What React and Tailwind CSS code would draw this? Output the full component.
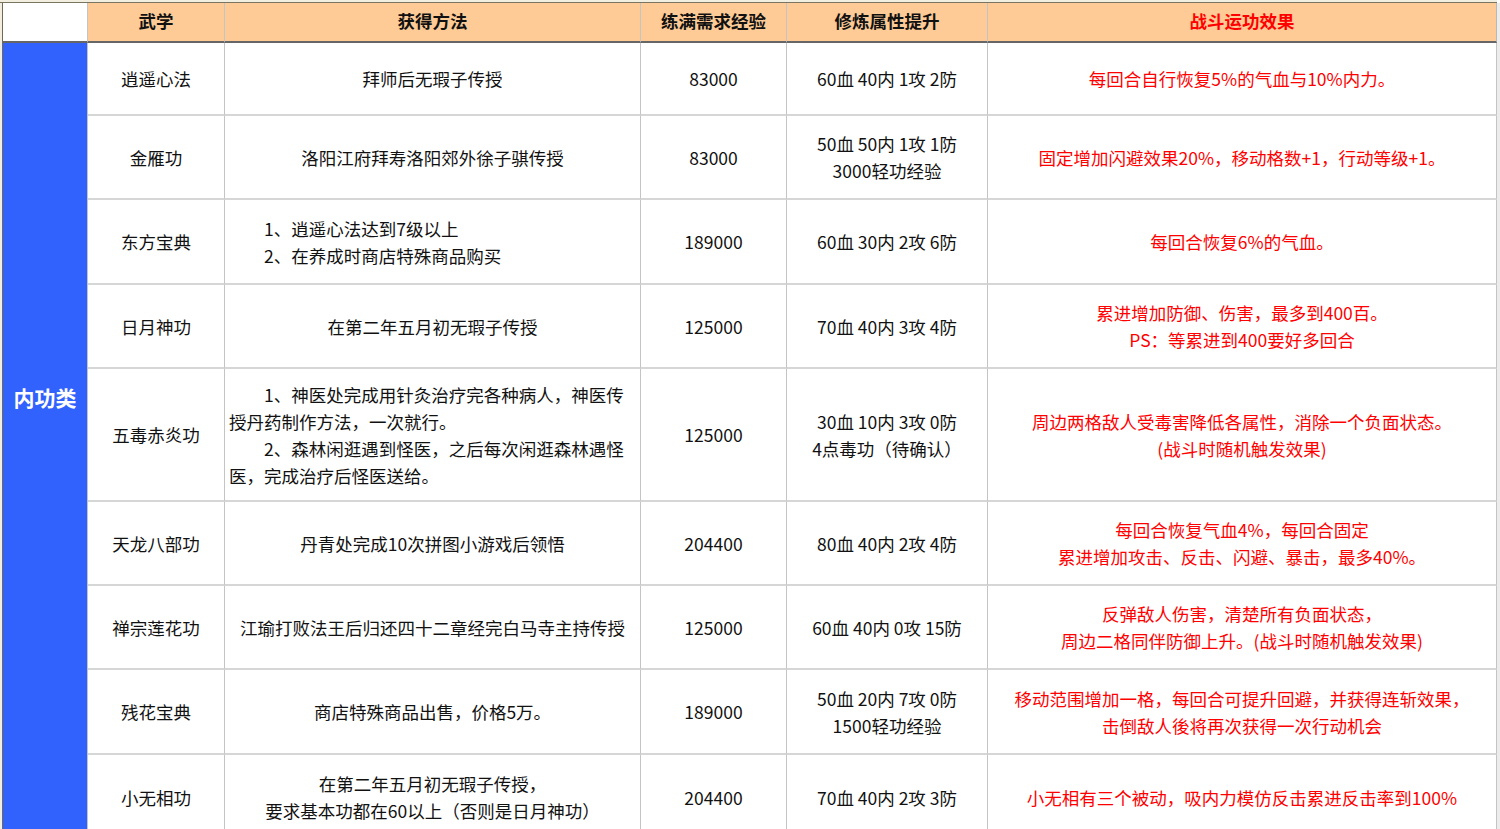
import React from "react";

const rows = [
  {
    h: "h-[73px]",
    name: "逍遥心法",
    method: ["拜师后无瑕子传授"],
    exp: "83000",
    stats: ["60血 40内 1攻 2防"],
    effect: ["每回合自行恢复5%的气血与10%内力。"],
  },
  {
    h: "h-[84px]",
    name: "金雁功",
    method: ["洛阳江府拜寿洛阳郊外徐子骐传授"],
    exp: "83000",
    stats: ["50血 50内 1攻 1防", "3000轻功经验"],
    effect: ["固定增加闪避效果20%，移动格数+1，行动等级+1。"],
  },
  {
    h: "h-[85px]",
    name: "东方宝典",
    list: [["1、逍遥心法达到7级以上"], ["2、在养成时商店特殊商品购买"]],
    exp: "189000",
    stats: ["60血 30内 2攻 6防"],
    effect: ["每回合恢复6%的气血。"],
  },
  {
    h: "h-[84px]",
    name: "日月神功",
    method: ["在第二年五月初无瑕子传授"],
    exp: "125000",
    stats: ["70血 40内 3攻 4防"],
    effect: ["累进增加防御、伤害，最多到400百。", "PS：等累进到400要好多回合"],
  },
  {
    h: "h-[133px]",
    name: "五毒赤炎功",
    list: [
      ["1、神医处完成用针灸治疗完各种病人，神医传", "授丹药制作方法，一次就行。"],
      ["2、森林闲逛遇到怪医，之后每次闲逛森林遇怪", "医，完成治疗后怪医送给。"],
    ],
    exp: "125000",
    stats: ["30血 10内 3攻 0防", "4点毒功（待确认）"],
    effect: ["周边两格敌人受毒害降低各属性，消除一个负面状态。", "(战斗时随机触发效果)"],
  },
  {
    h: "h-[84px]",
    name: "天龙八部功",
    method: ["丹青处完成10次拼图小游戏后领悟"],
    exp: "204400",
    stats: ["80血 40内 2攻 4防"],
    effect: ["每回合恢复气血4%，每回合固定", "累进增加攻击、反击、闪避、暴击，最多40%。"],
  },
  {
    h: "h-[84px]",
    name: "禅宗莲花功",
    method: ["江瑜打败法王后归还四十二章经完白马寺主持传授"],
    exp: "125000",
    stats: ["60血 40内 0攻 15防"],
    effect: ["反弹敌人伤害，清楚所有负面状态，", "周边二格同伴防御上升。(战斗时随机触发效果)"],
  },
  {
    h: "h-[85px]",
    name: "残花宝典",
    method: ["商店特殊商品出售，价格5万。"],
    exp: "189000",
    stats: ["50血 20内 7攻 0防", "1500轻功经验"],
    effect: ["移动范围增加一格，每回合可提升回避，并获得连斩效果，", "击倒敌人後将再次获得一次行动机会"],
  },
  {
    h: "h-[86px]",
    name: "小无相功",
    method: ["在第二年五月初无瑕子传授，", "要求基本功都在60以上（否则是日月神功）"],
    exp: "204400",
    stats: ["70血 40内 2攻 3防"],
    effect: ["小无相有三个被动，吸内力模仿反击累进反击率到100%"],
  },
];

const cell =
  "flex flex-col items-center justify-center text-center border-r border-r-[#c4c4c4] border-b-2 border-b-[#d6d6d6]";

function Lines({ lines }) {
  return lines.map((line) => <div key={line}>{line}</div>);
}

export default function App() {
  return (
    <div
      className="h-[829px] w-[1500px] overflow-hidden bg-white text-[17.5px] leading-[27px] text-[#111]"
      style={{ fontFamily: '"Noto Sans CJK SC", "Noto Sans", sans-serif' }}
    >
      <div className="h-[3px] w-[1497px] border-b border-b-[#7a7560] bg-[#f3efe0]" />
      <div className="flex">
        <div className="w-[3px] shrink-0 border-r border-r-[#6f6a58] bg-[#f3efe0]" />
        <div className="grid w-[1494px] grid-cols-[85px_137px_416px_146px_201px_509px]">
          {/* header */}
          <div className="h-[40px] border-r border-r-[#c4c4c4] border-b-2 border-b-[#666] bg-white" />
          {["武学", "获得方法", "练满需求经验", "修炼属性提升"].map((t) => (
            <div
              key={t}
              className="flex h-[40px] items-center justify-center border-r border-r-[#c4c4c4] border-b-2 border-b-[#666] bg-[#fecb96] pb-[3px] font-bold"
            >
              {t}
            </div>
          ))}
          <div className="flex h-[40px] items-center justify-center border-r border-r-[#b8b8b8] border-b-2 border-b-[#666] bg-[#fecb96] pb-[3px] font-bold text-[#ff0000]">
            战斗运功效果
          </div>

          {/* category */}
          <div className="row-span-9 flex justify-center border-r border-r-[#c4c4c4] bg-[#3262fe] pt-[341px] text-[21px] font-bold text-white">
            内功类
          </div>

          {rows.map((r) => (
            <React.Fragment key={r.name}>
              <div className={`${cell} ${r.h}`}>{r.name}</div>
              {r.list ? (
                <div className={`${r.h} flex flex-col justify-center border-r border-r-[#c4c4c4] border-b-2 border-b-[#d6d6d6] px-[4px] text-left`}>
                  {r.list.map((para) => (
                    <div key={para[0]}>
                      {para.map((line, i) => (
                        <div key={line} className={i === 0 ? "pl-[35px]" : ""}>
                          {line}
                        </div>
                      ))}
                    </div>
                  ))}
                </div>
              ) : (
                <div className={`${cell} ${r.h}`}>
                  <Lines lines={r.method} />
                </div>
              )}
              <div className={`${cell} ${r.h}`}>{r.exp}</div>
              <div className={`${cell} ${r.h}`}>
                <Lines lines={r.stats} />
              </div>
              <div className={`${cell} ${r.h} text-[#ff0000]`}>
                <Lines lines={r.effect} />
              </div>
            </React.Fragment>
          ))}
        </div>
        <div className="w-[3px] shrink-0 bg-[#ececec]" />
      </div>
    </div>
  );
}
